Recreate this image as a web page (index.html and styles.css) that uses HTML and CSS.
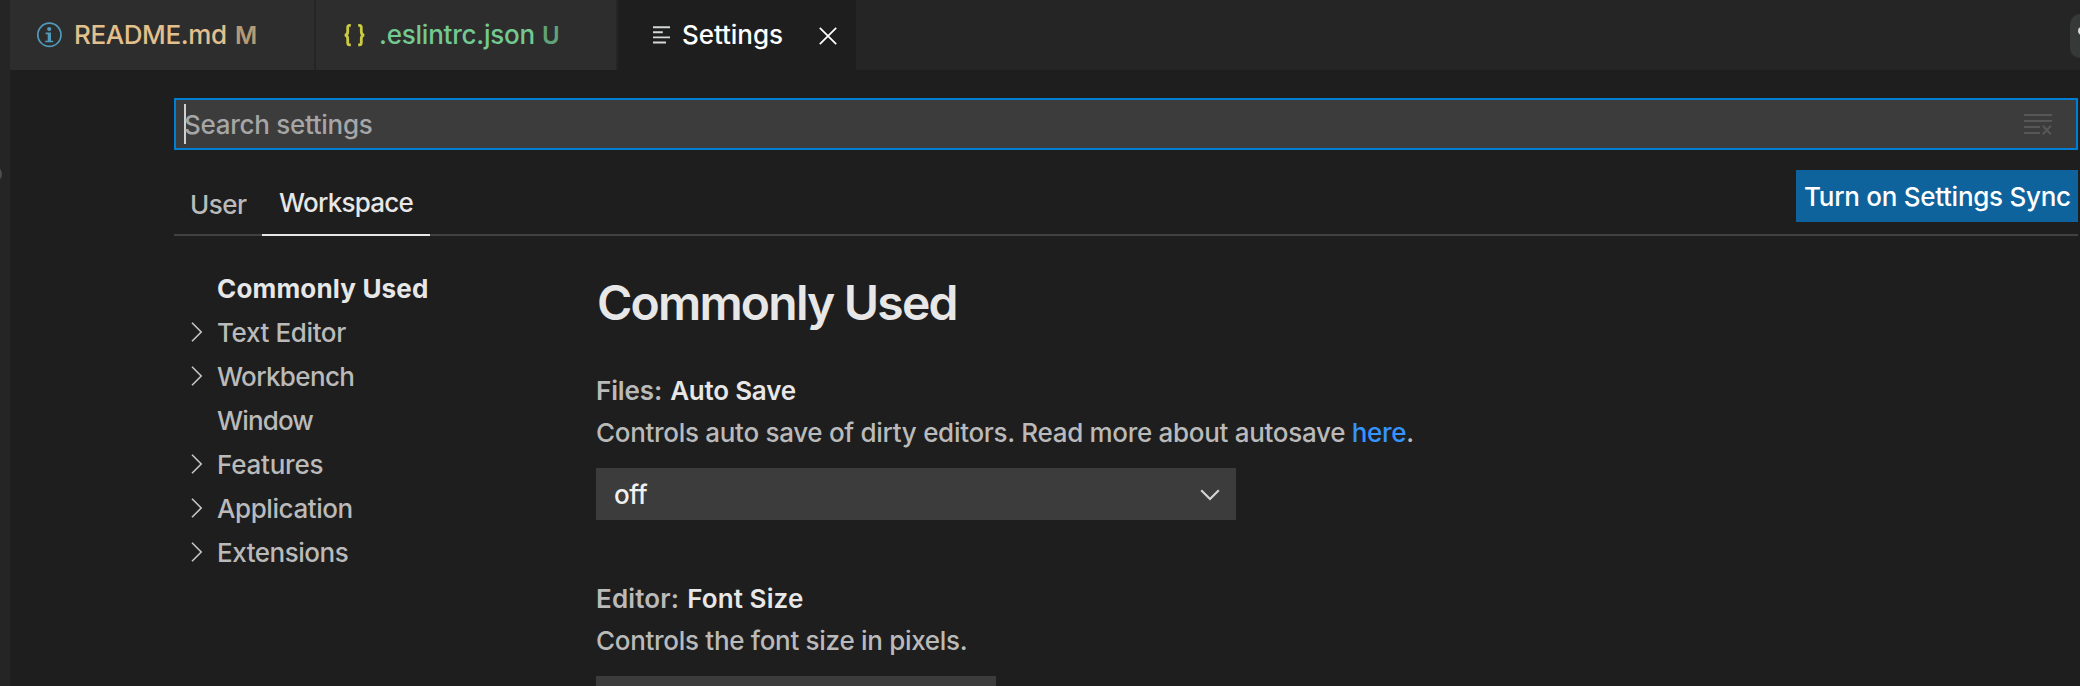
FILE: index.html
```html
<!DOCTYPE html>
<html lang="en">
<head>
<meta charset="utf-8">
<title>Settings</title>
<link rel="stylesheet" href="styles.css">
</head>
<body>
<div class="window">
  <aside class="sidebar-edge"><span class="sash-dot"></span></aside>
  <main class="editor">
    <nav class="tabs">
      <div class="tab tab-readme">
        <svg class="icon-info" viewBox="0 0 26 26"><circle cx="13.4" cy="12.8" r="11.6"/><circle class="solid" cx="13.2" cy="7.1" r="2.1"/><path class="solid" d="M9.6 10.6h5.4v8.1h2.2v1.6H9.2v-1.6h2.5v-6.5H9.6z"/></svg>
        <span class="name modified">README.md</span><span class="badge modified">M</span>
      </div>
      <div class="tab tab-eslint">
        <svg class="icon-json" viewBox="0 0 24 24"><path d="M7.8 2.3H6.6Q4.7 2.3 4.7 4.5V8.7Q4.7 11.9 1.8 12.2 4.7 12.5 4.7 15.7V19.7Q4.7 21.9 6.6 21.9H7.8M15.2 2.3H16.4Q18.3 2.3 18.3 4.5V8.7Q18.3 11.9 21.2 12.2 18.3 12.5 18.3 15.7V19.7Q18.3 21.9 16.4 21.9H15.2"/></svg>
        <span class="name untracked">.eslintrc.json</span><span class="badge untracked">U</span>
      </div>
      <div class="tab tab-settings">
        <svg class="icon-lines" viewBox="0 0 18 18"><path d="M0 1.2h17M0 6.3h9.8M0 11.4h17M0 16.5h13"/></svg>
        <span class="name">Settings</span>
        <svg class="icon-close" viewBox="0 0 18 18"><path d="M.8.8l16.4 16.4M17.2.8L.8 17.2"/></svg>
      </div>
      <div class="toolbar"><svg viewBox="0 0 10 44"><circle cx="12" cy="17" r="4"/></svg></div>
    </nav>
    <section class="settings">
      <div class="search">
        <span class="caret"></span><span class="placeholder">Search settings</span>
        <svg class="icon-clear" viewBox="0 0 28 22"><path d="M0 2h28M0 8h28M0 14h16M0 20h16M18.8 12.8l8 8.4M26.8 12.8l-8 8.4"/></svg>
      </div>
      <div class="scopes">
        <span class="scope user">User</span>
        <span class="scope workspace">Workspace</span>
        <button class="sync">Turn on Settings Sync</button>
      </div>
      <div class="body">
        <ul class="toc">
          <li class="current"><span class="twisty"></span><span class="t-common">Commonly Used</span></li>
          <li><svg class="twisty" viewBox="0 0 12 20"><path d="M1 .8l9.2 9.2L1 19.2"/></svg><span class="t-text">Text Editor</span></li>
          <li><svg class="twisty" viewBox="0 0 12 20"><path d="M1 .8l9.2 9.2L1 19.2"/></svg><span class="t-work">Workbench</span></li>
          <li><span class="twisty"></span><span class="t-window">Window</span></li>
          <li><svg class="twisty" viewBox="0 0 12 20"><path d="M1 .8l9.2 9.2L1 19.2"/></svg><span class="t-feat">Features</span></li>
          <li><svg class="twisty" viewBox="0 0 12 20"><path d="M1 .8l9.2 9.2L1 19.2"/></svg><span class="t-app">Application</span></li>
          <li><svg class="twisty" viewBox="0 0 12 20"><path d="M1 .8l9.2 9.2L1 19.2"/></svg><span class="t-ext">Extensions</span></li>
        </ul>
        <div class="list">
          <h1>Commonly Used</h1>
          <article class="setting">
            <h2><span class="category files">Files:</span><span class="label autosave">Auto Save</span></h2>
            <p>Controls auto save of dirty editors. Read more about autosave <a>here</a>.</p>
            <div class="select"><span>off</span><svg viewBox="0 0 20 12"><path d="M1.2 1.2L10 10l8.8-8.8"/></svg></div>
          </article>
          <article class="setting">
            <h2><span class="category ed">Editor:</span><span class="label fontsize">Font Size</span></h2>
            <p>Controls the font size in pixels.</p>
            <div class="number"></div>
          </article>
        </div>
      </div>
    </section>
  </main>
</div>
</body>
</html>
```
FILE: styles.css
```css
* { box-sizing: border-box; }
body {
  margin: 0;
  background: #1e1e1e;
  font: 450 26px/44px Inter, "Liberation Sans", sans-serif;
  color: #bababa;
  overflow: hidden;
}
svg { display: block; flex: none; fill: none; overflow: visible; }
.window { display: flex; width: 2080px; height: 686px; overflow: hidden; white-space: nowrap; }
.sidebar-edge { width: 10px; background: #252526; padding-top: 166px; overflow: hidden; }
.sash-dot { display: block; width: 16px; height: 16px; margin-left: -14px; border-radius: 50%; background: #4f4f50; }
.editor { flex: 1; min-width: 0; }

/* Editor tabs */
.tabs { display: flex; height: 70px; background: #252526; }
.tab { display: flex; align-items: center; height: 70px; background: #2d2d2d; }
.tab-readme { width: 304px; margin-right: 2px; padding-left: 26px; }
.tab-eslint { width: 300px; margin-right: 2px; padding-left: 27px; }
.tab-settings { width: 238px; padding-left: 35px; background: #1e1e1e; color: #fff; }
.modified { color: #e2c08d; }
.untracked { color: #73c991; }
.badge { font-size: 24px; font-weight: 600; opacity: .75; padding-top: 1px; }
.icon-info { width: 26px; height: 26px; stroke: #519aba; stroke-width: 1.7; margin-right: 12px; }
.icon-info .solid { fill: #519aba; stroke: none; }
.icon-json { width: 24px; height: 24px; stroke: #cbcb41; stroke-width: 2.8; margin-right: 12px; }
.tab-readme .name { width: 161px; letter-spacing: -.4px; }
.tab-eslint .name { width: 163px; letter-spacing: -.22px; }
.tab-settings .name { letter-spacing: -.05px; width: 137px; }
.icon-lines { width: 18px; height: 18px; stroke: #d4d7d6; stroke-width: 1.9; margin-right: 11px; }
.icon-close { width: 18px; height: 18px; stroke: #fff; stroke-width: 1.7; margin-top: 2px; }
.toolbar { margin: 14px 0 0 auto; width: 10px; height: 44px; border-radius: 10px 0 0 10px; background: #373938; overflow: hidden; }
.toolbar svg { width: 10px; height: 44px; fill: #d8d8d8; }

/* Search and scope header */
.settings { padding: 28px 2px 0 164px; }
.search { display: flex; align-items: center; height: 52px; padding: 0 24px 0 8px; border: 2px solid #007fd4; background: #3c3c3c; color: #a6a6a6; }
.caret { width: 2px; height: 40px; background: #d0d0d0; margin-right: -2px; }
.placeholder { letter-spacing: -.29px; padding-top: 2px; }
.icon-clear { width: 28px; height: 22px; margin-left: auto; stroke: #575757; stroke-width: 2; }
.scopes { display: flex; align-items: flex-start; height: 86px; padding-top: 20px; border-bottom: 2px solid #414141; }
.scope { height: 66px; }
.user { width: 88px; padding: 13px 0 0 16px; letter-spacing: -.5px; }
.workspace { width: 168px; padding: 11px 0 0 17px; letter-spacing: -.75px; color: #e7e7e7; border-bottom: 2px solid #e7e7e7; }
.sync { margin-left: auto; width: 282px; height: 52px; padding: 1px 0 0 8px; border: 0; background: #0e639c; color: #fff; font: inherit; text-align: left; letter-spacing: -.28px; }

/* Table of contents */
.body { display: flex; }
.toc { list-style: none; width: 422px; margin: 0; padding: 31px 0 0 17px; }
.toc li { display: flex; align-items: center; height: 44px; }
.twisty { width: 12px; height: 20px; margin: -2px 14px 0 0; stroke: #c5c5c5; stroke-width: 1.6; }
.current { color: #e7e7e7; font-weight: 700; }
.t-common { letter-spacing: .17px; }
.t-text { letter-spacing: -.38px; }
.t-work { letter-spacing: -.65px; }
.t-window { letter-spacing: -.85px; }
.t-feat { letter-spacing: -.22px; }
.t-app { letter-spacing: -.42px; }
.t-ext { letter-spacing: -.48px; }

/* Settings list */
.list { padding-top: 37px; }
h1 { margin: 0 0 36px 1px; font-size: 48px; line-height: 60px; font-weight: 600; letter-spacing: -1.79px; color: #e7e7e7; }
h2 { display: flex; gap: 8px; margin: 0; font-size: 26px; line-height: 44px; height: 42px; font-weight: 600; }
.label { color: #e7e7e7; }
.files { letter-spacing: -.11px; }
.autosave { letter-spacing: -.229px; }
.ed { letter-spacing: .15px; }
.fontsize { letter-spacing: .1px; }
p { margin: 0 0 13px; height: 44px; letter-spacing: -.3px; }
a { color: #3794ff; }
.setting { height: 208px; }
.select { display: flex; align-items: center; justify-content: space-between; width: 640px; height: 52px; padding: 2px 16px 0 18px; background: #3c3c3c; color: #f0f0f0; letter-spacing: -.4px; }
.select svg { width: 20px; height: 12px; stroke: #d4d4d4; stroke-width: 2.2; }
.number { width: 400px; height: 52px; background: #3c3c3c; }
```
